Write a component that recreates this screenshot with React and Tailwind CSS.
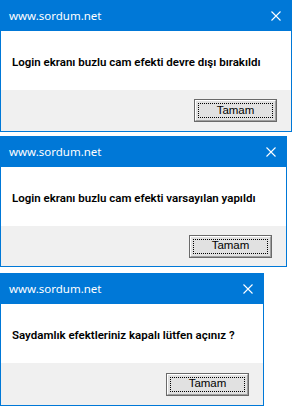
import React from "react";

function CloseIcon() {
  return (
    <svg width="10" height="10" viewBox="0 0 10 10" className="block">
      <path d="M0.5 0.5 L9.5 9.5 M9.5 0.5 L0.5 9.5" stroke="#ffffff" strokeWidth="1.1" fill="none" />
    </svg>
  );
}

function OkButton() {
  return (
    <div className="w-[83px] h-[23px] border border-[#6a6a6a] bg-[#e1e1e1] flex">
      <div className="flex-1 border-t border-l border-t-white border-l-white border-r border-b border-r-[#a0a0a0] border-b-[#a0a0a0] p-[2px] flex">
        <div className="flex-1 border border-dotted border-black flex items-center justify-center">
          <span className="text-[11.5px] leading-none text-black" style={{ fontFamily: '"Liberation Sans", Arial, sans-serif' }}>
            Tamam
          </span>
        </div>
      </div>
    </div>
  );
}

function Dialog({ widthClass, footerClass, gapClass, message }) {
  return (
    <div className={`${widthClass} ${gapClass} border border-[#0078d7] flex flex-col bg-white`}>
      <div className="h-[30px] bg-[#0078d7] flex items-center justify-between pl-[8px] pr-[10px]">
        <span className="text-white text-[11.5px] leading-none whitespace-nowrap" style={{ fontFamily: '"Noto Sans", "Open Sans", sans-serif' }}>
          www.sordum.net
        </span>
        <CloseIcon />
      </div>
      <div className="h-[59px] bg-white flex items-center pl-[11px] pt-[5px]">
        <span className="text-black text-[11.5px] font-semibold leading-none whitespace-nowrap" style={{ fontFamily: 'Roboto, "Noto Sans", sans-serif' }}>
          {message}
        </span>
      </div>
      <div className={`${footerClass} bg-[#f0f0f0] flex items-center justify-end pr-[14px]`}>
        <OkButton />
      </div>
    </div>
  );
}

export default function App() {
  return (
    <div className="w-[292px] h-[406px] bg-white flex flex-col overflow-hidden">
      <Dialog widthClass="w-[292px]" footerClass="h-[41px]" gapClass="mb-[4px]" message="Login ekranı buzlu cam efekti devre dışı bırakıldı" />
      <Dialog widthClass="w-[287px]" footerClass="h-[40px]" gapClass="mb-[6px]" message="Login ekranı buzlu cam efekti varsayılan yapıldı" />
      <Dialog widthClass="w-[264px]" footerClass="h-[42px]" gapClass="mb-0" message="Saydamlık efektleriniz kapalı lütfen açınız ?" />
    </div>
  );
}
